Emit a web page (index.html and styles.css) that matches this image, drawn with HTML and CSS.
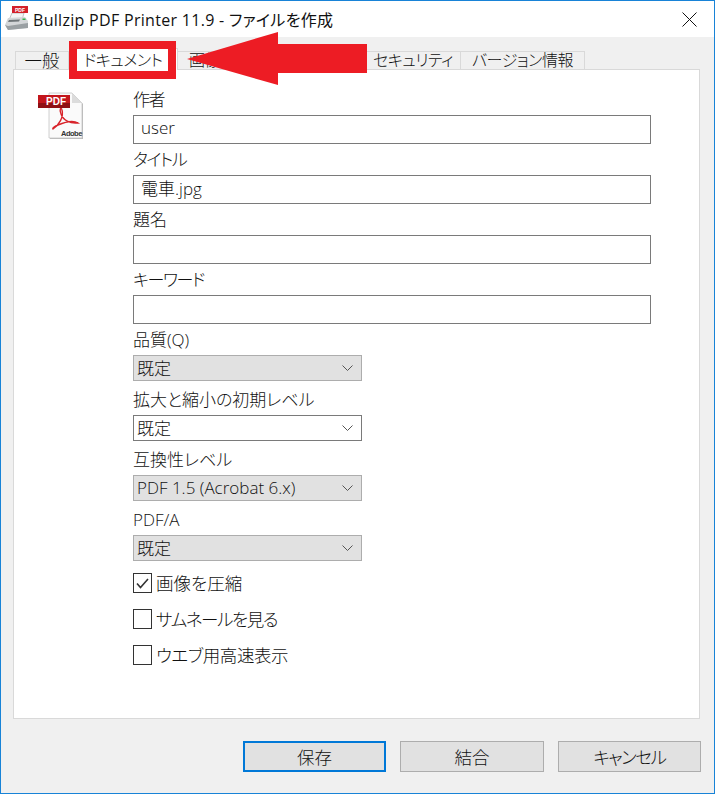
FILE: index.html
```html
<!DOCTYPE html>
<html lang="ja">
<head>
    <meta charset="UTF-8">
    <meta name="viewport" content="width=device-width, initial-scale=1.0">
    <title>Bullzip PDF Printer</title>
    <link rel="stylesheet" href="styles.css">
</head>
<body>

    <div class="window">
        <div class="titlebar">
            <svg class="app-icon" width="24" height="26" viewBox="0 0 24 26">
                <path d="M7 7 L19 7 L17 14 L4 14 Z" fill="#f4f4f4" stroke="#b5b5b5" stroke-width="0.8"/>
                <rect x="7" y="0" width="16" height="7" fill="#d4202a"/>
                <text class="app-icon-text" x="10" y="5.5">PDF</text>
                <path d="M3 12 L20 11 L23 15 L23 22 L3 24 L0 19 Z" fill="#d3d6d8"/>
                <path d="M0 19 L3 20 L23 17 L23 22 L3 24 Z" fill="#9aa0a3"/>
                <path d="M4 14 L15 13.5 L14 15.5 L3 16 Z" fill="#6f7578"/>
                <rect x="17.5" y="12.5" width="3" height="1.5" fill="#35b34a"/>
            </svg>
            <span class="title-text">Bullzip PDF Printer 11.9 - ファイルを作成</span>
            <svg class="close-icon" width="15" height="15" viewBox="0 0 15 15">
                <path d="M0.5 0.5 L14.5 14.5 M14.5 0.5 L0.5 14.5" stroke="#111" stroke-width="1" fill="none"/>
            </svg>
        </div>

        <div class="content">
            <div class="tabs">
                <div class="tab tab-general">一般</div>
                <div class="tab tab-document active">ドキュメント</div>
                <div class="tab tab-image">画像</div>
                <div class="tab tab-watermark">透かし</div>
                <div class="tab tab-merge">結合</div>
                <div class="tab tab-security">セキュリティ</div>
                <div class="tab tab-version">バージョン情報</div>
            </div>

            <div class="panel">
                <svg class="pdf-icon" width="47" height="47" viewBox="0 0 47 47">
                    <path d="M13 2 L36 2 L46 12 L46 47 L13 47 Z" fill="#b9b9b9"/>
                    <path d="M12 1 L35 1 L45 11 L45 46 L12 46 Z" fill="#fafafa" stroke="#c4c4c4" stroke-width="0.8"/>
                    <path d="M35 1 L35 11 L45 11 Z" fill="#dcdcdc"/>
                    <path d="M16 37 C22 33 27 25 25 18 C24 14 22 18 24 22 C26 28 33 32 41 31 C36 28 28 30 21 33 C18 34 15 36 16 37 Z" fill="none" stroke="#d8232a" stroke-width="1.4"/>
                    <rect x="1" y="3" width="32" height="13" fill="#c3161c"/>
                    <rect x="1" y="11" width="32" height="5" fill="#8f0f14"/>
                    <text class="pdf-icon-badge" x="9" y="13">PDF</text>
                    <text class="pdf-icon-brand" x="24" y="44">Adobe</text>
                </svg>

                <div class="form">
                    <div class="field">
                        <label class="field-label kana">作者</label>
                        <input class="text-input" type="text" value="user">
                    </div>
                    <div class="field">
                        <label class="field-label kana">タイトル</label>
                        <input class="text-input" type="text" value="電車.jpg">
                    </div>
                    <div class="field">
                        <label class="field-label">題名</label>
                        <input class="text-input" type="text" value="">
                    </div>
                    <div class="field">
                        <label class="field-label kana">キーワード</label>
                        <input class="text-input" type="text" value="">
                    </div>

                    <div class="field field-select">
                        <label class="field-label">品質(Q)</label>
                        <div class="combo">
                            <span>既定</span>
                            <svg class="chevron" width="11" height="6" viewBox="0 0 11 6"><path d="M0.5 0.5 L5.5 5.5 L10.5 0.5" fill="none" stroke="#555" stroke-width="1"/></svg>
                        </div>
                    </div>
                    <div class="field field-select">
                        <label class="field-label">拡大と縮小の初期レベル</label>
                        <div class="combo combo-white">
                            <span>既定</span>
                            <svg class="chevron" width="11" height="6" viewBox="0 0 11 6"><path d="M0.5 0.5 L5.5 5.5 L10.5 0.5" fill="none" stroke="#555" stroke-width="1"/></svg>
                        </div>
                    </div>
                    <div class="field field-select">
                        <label class="field-label">互換性レベル</label>
                        <div class="combo">
                            <span>PDF 1.5 (Acrobat 6.x)</span>
                            <svg class="chevron" width="11" height="6" viewBox="0 0 11 6"><path d="M0.5 0.5 L5.5 5.5 L10.5 0.5" fill="none" stroke="#555" stroke-width="1"/></svg>
                        </div>
                    </div>
                    <div class="field field-select">
                        <label class="field-label">PDF/A</label>
                        <div class="combo">
                            <span>既定</span>
                            <svg class="chevron" width="11" height="6" viewBox="0 0 11 6"><path d="M0.5 0.5 L5.5 5.5 L10.5 0.5" fill="none" stroke="#555" stroke-width="1"/></svg>
                        </div>
                    </div>

                    <div class="checks">
                        <div class="check-row">
                            <span class="check-box">
                                <svg width="13" height="11" viewBox="0 0 13 11"><path d="M1 5.5 L4.5 9.5 L12 1" fill="none" stroke="#333" stroke-width="1.6"/></svg>
                            </span>
                            <span>画像を圧縮</span>
                        </div>
                        <div class="check-row">
                            <span class="check-box"></span>
                            <span class="kana">サムネールを見る</span>
                        </div>
                        <div class="check-row">
                            <span class="check-box"></span>
                            <span class="kana-slight">ウエブ用高速表示</span>
                        </div>
                    </div>
                </div>
            </div>

            <div class="buttons">
                <button class="btn btn-default">保存</button>
                <button class="btn btn-wide">結合</button>
                <button class="btn kana">キャンセル</button>
            </div>
        </div>

        <!-- 赤い注釈 -->
        <div class="note-box"></div>
        <svg class="note-arrow" width="180" height="54" viewBox="0 0 180 54">
            <path d="M0 27 L91 0 L91 12 L180 12 L180 41 L91 41 L91 53 Z" fill="#ed1c24"/>
        </svg>
    </div>

</body>
</html>
```

FILE: styles.css
```css
* {
    box-sizing: border-box;
}
html, body {
    margin: 0;
    padding: 0;
}
body {
    background: #f0f0f0;
    color: #111;
    font-family: "Open Sans", "Noto Sans CJK JP", sans-serif;
    font-size: 17px;
    font-weight: 300;
    font-feature-settings: "palt";
}
.kana {
    letter-spacing: -1.4px;
}
.kana-slight {
    letter-spacing: -0.4px;
}
.window {
    position: relative;
    width: 715px;
    height: 794px;
    border: 1px solid #1883d7;
    display: flex;
    flex-direction: column;
}

.titlebar {
    height: 36px;
    background: white;
    display: flex;
    align-items: center;
    padding: 0 17px 0 4px;
    flex-shrink: 0;
}
.app-icon {
    margin-right: 4px;
}
.app-icon-text {
    font-family: "Liberation Sans", sans-serif;
    font-size: 5px;
    font-weight: bold;
    fill: white;
}
.title-text {
    font-size: 16px;
    font-weight: 400;
    white-space: nowrap;
    letter-spacing: 0.3px;
}
.close-icon {
    margin-left: auto;
}

.content {
    flex: 1;
    background: #f0f0f0;
    padding: 14px 14px 0 12px;
    display: flex;
    flex-direction: column;
}

.tabs {
    display: flex;
    height: 18px;
    margin-left: 2px;
    flex-shrink: 0;
}
.tab {
    height: 19px;
    background: #f0f0f0;
    border: 1px solid #d9d9d9;
    border-bottom: none;
    border-left: none;
    font-size: 16px;
    line-height: 17px;
    text-align: center;
    white-space: nowrap;
    letter-spacing: -0.5px;
}
.tab:first-child {
    border-left: 1px solid #d9d9d9;
}
.tab.active {
    height: 22px;
    margin-top: -3px;
    background: white;
    position: relative;
    z-index: 1;
    line-height: 22px;
}
.tab-general {
    width: 54px;
    font-size: 17.5px;
    letter-spacing: 0;
}
.tab-document { width: 109px; }
.tab-image { width: 54px; }
.tab-watermark { width: 66px; }
.tab-merge { width: 68px; }
.tab-security { width: 95px; }
.tab-version { width: 124px; }

.panel {
    height: 650px;
    background: white;
    border: 1px solid #d9d9d9;
    padding: 14px 0 0 23px;
    display: flex;
    gap: 49px;
    flex-shrink: 0;
}
.pdf-icon {
    margin-top: 8px;
    flex-shrink: 0;
}
.pdf-icon-badge {
    font-family: "Liberation Sans", sans-serif;
    font-size: 10px;
    font-weight: bold;
    fill: white;
}
.pdf-icon-brand {
    font-family: "Liberation Sans", sans-serif;
    font-size: 7.5px;
    font-weight: bold;
    fill: #333;
    letter-spacing: -0.5px;
}

.form {
    width: 518px;
}
.field {
    display: flex;
    flex-direction: column;
}
.field-label {
    height: 31px;
    line-height: 32px;
    white-space: nowrap;
}
.text-input {
    width: 518px;
    height: 29px;
    border: 1px solid #7a7a7a;
    background: white;
    padding: 0 7px 5px;
    font: inherit;
    font-feature-settings: inherit;
    color: #111;
    outline: none;
}
.field-select + .field-select {
    margin-top: 3px;
}
.combo {
    width: 229px;
    height: 26px;
    background: #e1e1e1;
    border: 1px solid #adadad;
    display: flex;
    align-items: center;
    justify-content: space-between;
    padding: 0 8px 2px 3px;
    white-space: nowrap;
}
.chevron {
    margin-top: 2px;
}
.combo-white {
    background: white;
    border-color: #7a7a7a;
}

.checks {
    margin-top: 12px;
    display: flex;
    flex-direction: column;
    gap: 16px;
    font-size: 17.5px;
}
.check-row {
    display: flex;
    align-items: center;
    gap: 4px;
    height: 20px;
    line-height: 18px;
}
.check-box {
    width: 19px;
    height: 20px;
    background: white;
    border: 1px solid #333;
    display: flex;
    align-items: center;
    justify-content: center;
}

.buttons {
    display: flex;
    justify-content: flex-end;
    gap: 14px;
    margin-top: 22px;
    margin-right: -1px;
}
.btn {
    width: 143px;
    height: 31px;
    background: #e1e1e1;
    border: 1px solid #adadad;
    font-family: inherit;
    font-weight: inherit;
    font-feature-settings: inherit;
    font-size: 17.5px;
    color: #111;
    padding: 0 0 1px;
}
.btn-wide {
    width: 144px;
}
.btn-default {
    border: 2px solid #0078d7;
}

.note-box {
    position: absolute;
    left: 68px;
    top: 40px;
    width: 107px;
    height: 38px;
    border: 8px solid #ed1c24;
    z-index: 2;
}
.note-arrow {
    position: absolute;
    left: 186px;
    top: 31px;
    z-index: 2;
}
```
